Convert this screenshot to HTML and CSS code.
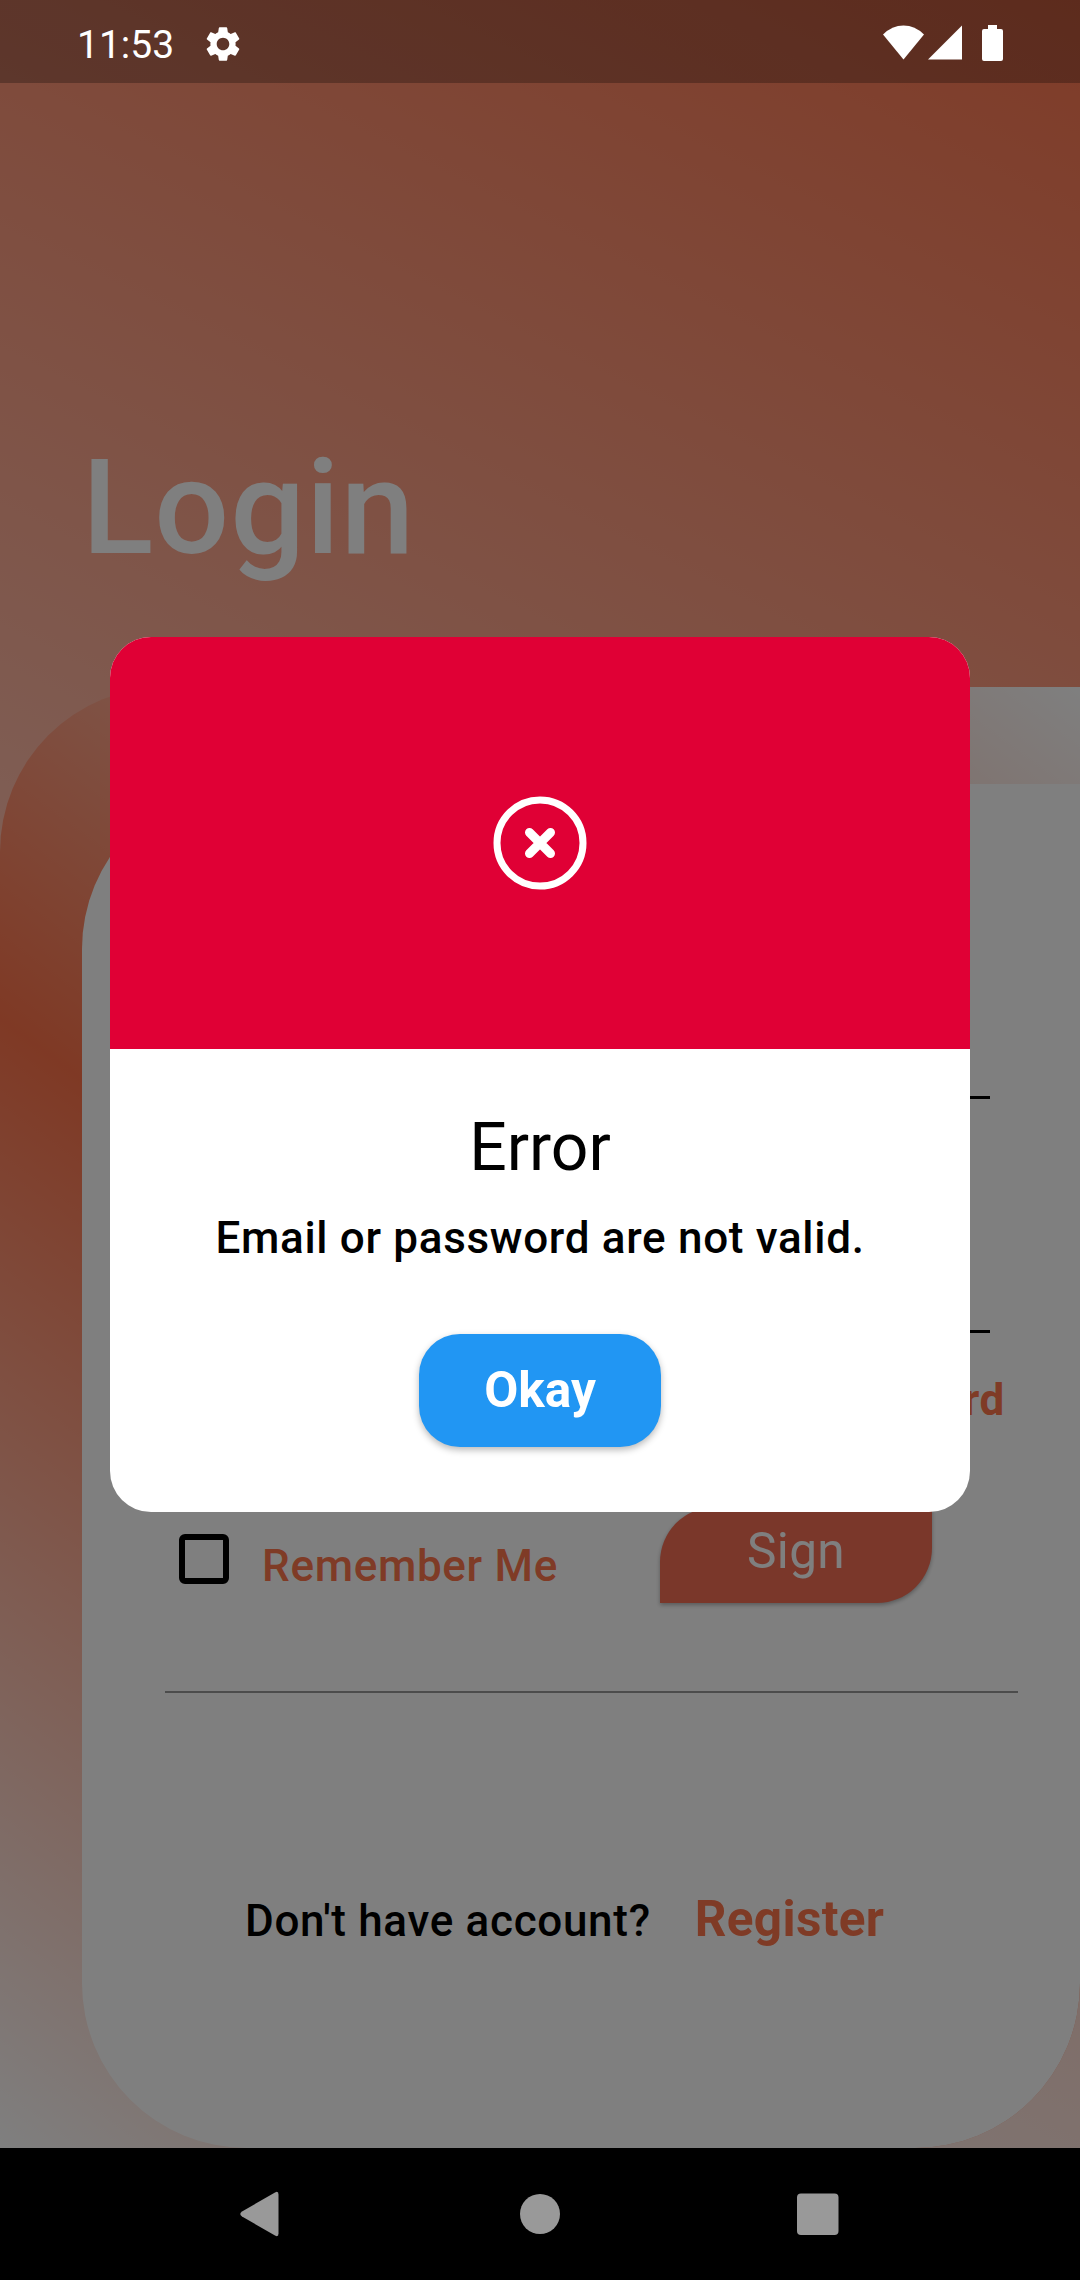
FILE: index.html
```
<!DOCTYPE html>
<html lang="en">
<head>
<meta charset="utf-8">
<title>Login</title>
<link rel="stylesheet" href="styles.css">
</head>
<body>
<div class="screen">
  <main class="page">
    <h1 class="page-title">Login</h1>
    <div class="sheet">
      <form class="panel">
        <div class="field field-email"></div>
        <div class="field field-password"></div>
        <a class="forgot">Forgot Password</a>
        <div class="actions">
          <span class="checkbox"></span>
          <span class="remember">Remember Me</span>
          <span class="sign">Sign</span>
        </div>
        <div class="divider"></div>
        <div class="signup">
          <span class="question">Don't have account?</span>
          <a class="register">Register</a>
        </div>
      </form>
    </div>
  </main>

  <nav class="navbar">
    <svg class="nav-icon" viewBox="0 0 60 60"><path d="M46.500 10.500V49.500Q46.500 53.500 43 51.500L10 32.500Q6.500 30 10 27.500L43 8.500Q46.500 6.500 46.500 10.500Z"/></svg>
    <svg class="nav-icon" viewBox="0 0 60 60"><circle cx="30" cy="30" r="20"/></svg>
    <svg class="nav-icon" viewBox="0 0 60 60"><rect x="9" y="9.500" width="41.500" height="41.500" rx="4"/></svg>
  </nav>

  <div class="scrim">
    <section class="dialog" role="alertdialog">
      <div class="dialog-header">
        <svg class="error-icon" viewBox="0 0 94 94"><circle cx="47" cy="47" r="43"/><path d="M36.500 36.500L57.500 57.500M57.500 36.500L36.500 57.500"/></svg>
      </div>
      <div class="dialog-body">
        <h2 class="dialog-title">Error</h2>
        <p class="dialog-text">Email or password are not valid.</p>
        <button class="okay">Okay</button>
      </div>
    </section>
  </div>

  <header class="statusbar">
    <span class="clock">11:53</span>
    <svg class="gear" viewBox="0 0 24 24"><path d="M19.140 12.940c.04-.3.06-.61.06-.94 0-.32-.02-.64-.07-.94l2.030-1.580c.18-.14.23-.41.12-.61l-1.920-3.320c-.12-.22-.37-.29-.59-.22l-2.390.96c-.5-.38-1.030-.7-1.620-.94l-.36-2.540c-.04-.24-.24-.41-.48-.41h-3.840c-.24 0-.43.17-.47.41l-.36 2.540c-.59.24-1.130.57-1.620.94l-2.390-.96c-.22-.08-.47 0-.59.22L2.740 8.870c-.12.21-.08.47.12.61l2.030 1.580c-.05.3-.09.63-.09.94s.02.64.07.94l-2.030 1.580c-.18.14-.23.41-.12.61l1.920 3.320c.12.22.37.29.59.22l2.390-.96c.5.38 1.030.7 1.620.94l.36 2.540c.05.24.24.41.48.41h3.840c.24 0 .44-.17.47-.41l.36-2.540c.59-.24 1.130-.56 1.620-.94l2.390.96c.22.08.47 0 .59-.22l1.920-3.320c.12-.22.07-.47-.12-.61l-2.010-1.580zM12 15.600c-1.980 0-3.600-1.620-3.600-3.600s1.620-3.600 3.600-3.600 3.600 1.620 3.600 3.600-1.620 3.600-3.600 3.600z"/></svg>
    <svg class="signals" viewBox="0 0 120 36"><path d="M0 9.500Q9 .5 20.500 .5T41 9.500L20.500 34.500Z"/><path d="M79 .5V34.500H45Z"/><path d="M105 0h9v4h4q2 0 2 2v28q0 2-2 2h-17q-2 0-2-2v-28q0-2 2-2h4Z"/></svg>
  </header>
</div>
</body>
</html>
```
FILE: styles.css
```
* { box-sizing: border-box; }

body {
  margin: 0;
  font-family: Roboto, "Liberation Sans", sans-serif;
}

.screen {
  position: relative;
  display: flex;
  flex-direction: column;
  width: 1080px;
  height: 2280px;
  overflow: hidden;
}

.page {
  display: flex;
  flex-direction: column;
  height: 2148px;
  background: linear-gradient(206.694deg, #ff7750, #fff);
}

.page-title {
  height: 687px;
  margin: 0;
  padding: 430px 0 0 82px;
  color: #fff;
  font-size: 132px;
  font-weight: 500;
  letter-spacing: 1px;
  line-height: 156px;
}

.sheet {
  flex: 1;
  padding: 97px 0 0 82px;
  border-radius: 165px 0 165px 0;
  background: linear-gradient(216.473deg, #fff, #ff734a, #fff);
}

.panel {
  display: flex;
  flex-direction: column;
  height: 100%;
  border-radius: 165px 0 165px 165px;
  background: #fff;
}

.field {
  margin: 0 90px 0 83px;
  border-bottom: 3px solid #000;
}

.field-email { height: 315px; }
.field-password { height: 234px; }

.forgot {
  margin: 41px 75px 0 0;
  align-self: flex-end;
  color: #ff774d;
  font-size: 44px;
  font-weight: 700;
  letter-spacing: .69px;
  line-height: 52px;
}

.actions {
  display: flex;
  align-items: flex-start;
  height: 96px;
  margin: 81px 0 0 97px;
}

.checkbox {
  width: 50px;
  height: 50px;
  margin-top: 27px;
  border: 6px solid #000;
  border-radius: 6px;
}

.remember {
  width: 398px;
  margin: 33px 0 0 33px;
  color: #ff774d;
  font-size: 44px;
  font-weight: 500;
  letter-spacing: .69px;
  line-height: 52px;
}

.sign {
  width: 272px;
  height: 96px;
  padding-top: 15px;
  border-radius: 55px 0 55px 0;
  background: #f56e55;
  box-shadow: 0 2px 4px rgba(0, 0, 0, .3);
  color: #fff;
  font-size: 49.500px;
  letter-spacing: .34px;
  line-height: 58px;
  text-align: center;
}

.divider {
  height: 2px;
  margin: 88px 62px 0 83px;
  background: #999;
}

.signup {
  display: flex;
  align-items: baseline;
  gap: 44px;
  margin: 196px 0 0 163px;
}

.question {
  font-size: 44px;
  font-weight: 500;
  letter-spacing: .69px;
  line-height: 58px;
}

.register {
  margin-bottom: -1px;
  padding-top: 1px;
  color: #ff774d;
  font-size: 49.500px;
  font-weight: 700;
  letter-spacing: .34px;
}

.navbar {
  display: flex;
  justify-content: center;
  align-items: center;
  gap: 218px;
  height: 132px;
  background: #000;
}

.nav-icon {
  width: 60px;
  height: 60px;
  fill: #999;
}

/* Modal layer above the page */
.scrim {
  position: absolute;
  inset: 0 0 132px;
  display: flex;
  justify-content: center;
  align-items: center;
  background: rgba(0, 0, 0, .5);
}

.dialog {
  width: 860px;
  height: 875px;
  overflow: hidden;
  border-radius: 41px;
  background: #fff;
}

.dialog-header {
  display: flex;
  justify-content: center;
  align-items: center;
  height: 412px;
  background: #e00035;
}

.error-icon {
  width: 94px;
  height: 94px;
  fill: none;
  stroke: #fff;
  stroke-width: 7;
}

.error-icon path {
  stroke-width: 9;
  stroke-linecap: round;
}

.dialog-body {
  display: flex;
  flex-direction: column;
  align-items: center;
  padding-top: 60px;
}

.dialog-title {
  margin: 0;
  font-size: 66px;
  font-weight: 400;
  line-height: 78px;
}

.dialog-text {
  margin: 25px 0 0;
  font-size: 44px;
  font-weight: 500;
  letter-spacing: .69px;
  line-height: 52px;
}

.okay {
  width: 242px;
  height: 113px;
  margin-top: 70px;
  padding: 0;
  border: 0;
  border-radius: 41px;
  background: #2196f3;
  box-shadow: 0 3px 7px rgba(0, 0, 0, .28);
  color: #fff;
  font: 700 49.500px/113px Roboto, sans-serif;
}

.statusbar {
  position: absolute;
  inset: 0 0 auto;
  display: flex;
  align-items: center;
  height: 86px;
  padding: 3px 77px 0;
  background: linear-gradient(rgba(0, 0, 0, .27) 83px, transparent 83px);
  color: #fff;
}

.clock {
  font-size: 39px;
}

.gear {
  width: 42px;
  height: 42px;
  margin: 0 0 1px 28px;
  fill: #fff;
}

.signals {
  width: 120px;
  height: 36px;
  margin: 0 0 4px auto;
  fill: #fff;
}
```
